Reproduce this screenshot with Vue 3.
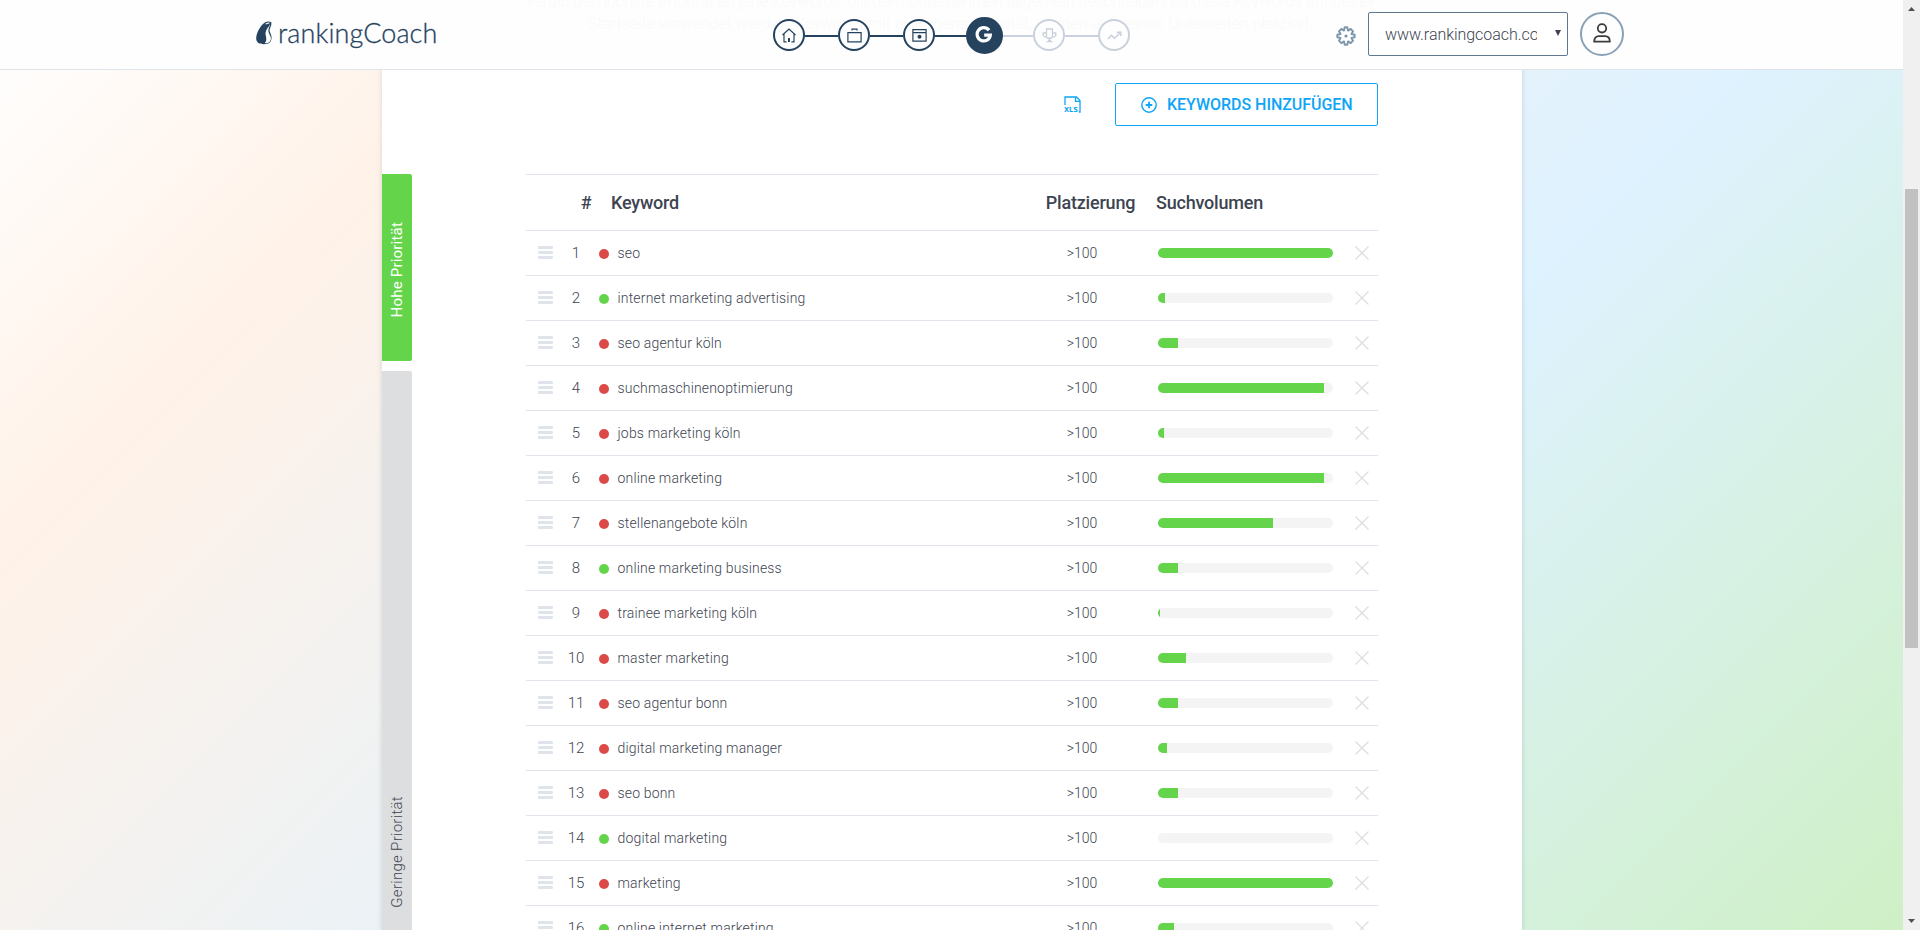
<script setup>
const rows = [
  ['seo', 'red', 175],
  ['internet marketing advertising', 'green', 7],
  ['seo agentur köln', 'red', 20],
  ['suchmaschinenoptimierung', 'red', 166],
  ['jobs marketing köln', 'red', 6],
  ['online marketing', 'red', 166],
  ['stellenangebote köln', 'red', 115],
  ['online marketing business', 'green', 20],
  ['trainee marketing köln', 'red', 2],
  ['master marketing', 'red', 28],
  ['seo agentur bonn', 'red', 20],
  ['digital marketing manager', 'red', 9],
  ['seo bonn', 'red', 20],
  ['dogital marketing', 'green', 0],
  ['marketing', 'red', 175],
  ['online internet marketing', 'green', 16],
].map(([keyword, color, volume], i) => ({ n: i + 1, keyword, color, volume: (volume / 175) * 100 + '%' }))
</script>

<template>
  <div class="screen">
    <div class="main">
      <header class="header">
        <p class="intro">Vergib die höchste Priorität an jene Keywords, die dem Unternehmen allgemein beschreiben, da diese Keywords auf deiner<br>Startseite verwendet werden. Keywords mit niedrigerer Priorität, werden auf deinen Unterseiten platziert.</p>
        <div class="brand">
          <svg width="16" height="24" viewBox="0 0 16 24">
            <path d="M9.200 1.200C11 .2 14 .1 15.300 1.200C15.800 3.400 14.800 5.500 13.800 8C13.300 9.800 13.700 10.800 14.600 12.500C15.600 14.500 16 17.500 14.900 20C13.800 22.600 11 23.200 8 23.200C3.500 23.200 .2 21.600 .2 17.500C.2 12 4.800 3.600 9.200 1.200Z" fill="#25435f"/>
            <path d="M14.300 2.800C12.800 6.200 9.800 8.500 9.500 12C9.400 14.500 10.300 15.500 10.300 18C10.300 20.300 9.300 21.700 8.500 22.300C12.500 22.500 15 20.600 14.900 17.300C14.800 14.300 12.500 12.500 12.300 10C12.300 7.500 14 5.300 14.300 2.800Z" fill="#fff"/>
            <path d="M9.600 3L13.500 1.800" stroke="#fff" stroke-width="1.100"/>
          </svg>
          <span class="brand-name">rankingCoach</span>
        </div>

        <nav class="steps">
          <span class="step">
            <svg width="14" height="15" viewBox="0 0 14 15" fill="none" stroke="currentColor" stroke-width="1.200">
              <path d="M.5 7L7 1L13.500 7M2 6V13.900H4.600M12 6V13.900H9.400"/><path d="M6 10H8V14H6Z" fill="currentColor" stroke="none"/>
            </svg>
          </span>
          <i class="link"></i>
          <span class="step">
            <svg width="15" height="15" viewBox="0 0 15 15" fill="none" stroke="currentColor" stroke-width="1.200">
              <path d="M.9 4.700H14.100V13.900H.9ZM5 2.600V1.100H10V2.600"/>
            </svg>
          </span>
          <i class="link"></i>
          <span class="step">
            <svg width="15" height="15" viewBox="0 0 15 15" fill="none" stroke="currentColor" stroke-width="1.200">
              <path d="M.9 1.700H14.100V13.200H.9ZM.9 4.600H14.100"/><circle cx="7.500" cy="8.800" r="2" fill="currentColor" stroke="none"/>
            </svg>
          </span>
          <i class="link"></i>
          <span class="step active">
            <svg width="18" height="18" viewBox="0 0 18 18" fill="none" stroke="#fff" stroke-width="3.200">
              <path d="M14 4.300A6.600 6.600 0 1 0 15.300 9.200H9.200"/>
            </svg>
          </span>
          <i class="link off"></i>
          <span class="step off">
            <svg width="15" height="15" viewBox="0 0 15 15" fill="none" stroke="currentColor" stroke-width="1.300">
              <path d="M4.500 1H10.500V8.500L9.500 10H5.500L4.500 8.500ZM4.500 5H1.200V7.500L3 8.900H4.700M10.500 5H13.800V7.500L12 8.900H10.300M7.500 10V12.300M4.500 13.700H10.500M6 12.300H9"/>
            </svg>
          </span>
          <i class="link off"></i>
          <span class="step off">
            <svg width="15" height="15" viewBox="0 0 15 15" fill="none" stroke="currentColor" stroke-width="1.500">
              <path d="M.8 11L4.500 7.400L7.600 10.300L13.500 4.400M9.800 4.200H13.800V8"/>
            </svg>
          </span>
        </nav>

        <div class="account">
          <svg class="gear" width="20" height="20" viewBox="0 0 20 20" fill="none" stroke="#7e96ab" stroke-width="1.900" stroke-linejoin="round">
            <path d="M8.700 1.300H11.300L12 4.600L14.700 2.900L17.100 5.300L15.400 8L18.700 8.700V11.300L15.400 12L17.100 14.700L14.700 17.100L12 15.400L11.300 18.700H8.700L8 15.400L5.300 17.100L2.900 14.700L4.600 12L1.300 11.300V8.700L4.600 8L2.900 5.300L5.300 2.900L8 4.600Z"/>
            <circle cx="10" cy="10" r="1.600" fill="#7e96ab" stroke="none"/>
          </svg>
          <div class="site"><span>www.rankingcoach.com</span><i></i></div>
          <div class="user">
            <svg width="18" height="20" viewBox="0 0 18 20" fill="none" stroke="#3b3c40" stroke-width="1.800">
              <circle cx="9" cy="5.300" r="4.200"/><path d="M1.200 18.600C1.200 15 2.800 13.200 6 13.200H12C15.200 13.200 16.800 15 16.800 18.600Z"/>
            </svg>
          </div>
        </div>
      </header>

      <main class="sheet">
        <aside class="tabs">
          <div class="tab high"><span>Hohe Priorität</span></div>
          <div class="tab low"><span>Geringe Priorität</span></div>
        </aside>

        <section class="content">
          <div class="toolbar">
            <svg class="xls" width="17" height="17" viewBox="0 0 17 17" fill="none" stroke="#0ea5f7" stroke-width="1.300">
              <path d="M1 9V1H12.500L16 4.500V16H15M11.500 1V5.300H16"/>
              <text x="0" y="16" class="xls-text" textLength="14" lengthAdjust="spacingAndGlyphs">XLS</text>
            </svg>
            <button class="add">
              <svg width="16" height="16" viewBox="0 0 16 16" fill="none" stroke="currentColor" stroke-width="1.400">
                <circle cx="8" cy="8" r="7.200"/><path d="M8 4.700V11.300M4.700 8H11.300" stroke-width="1.800"/>
              </svg>
              <span>KEYWORDS HINZUFÜGEN</span>
            </button>
          </div>

          <div class="table">
            <div class="row head">
              <span></span><span class="num">#</span><span class="kw-head">Keyword</span>
              <span class="rank">Platzierung</span><span class="vol-head">Suchvolumen</span><span></span>
            </div>
            <div v-for="row in rows" :key="row.n" class="row">
              <span class="grip"><i></i><i></i><i></i></span>
              <span class="num">{{ row.n }}</span>
              <span class="keyword"><i class="dot" :class="row.color"></i>{{ row.keyword }}</span>
              <span class="rank">&gt;100</span>
              <span class="track"><i :style="{ width: row.volume }"></i></span>
              <svg class="remove" width="14" height="14" viewBox="0 0 14 14" stroke="#dcdee1" stroke-width="1.300"><path d="M.5 .5L13.500 13.500M13.500 .5L.5 13.500"/></svg>
            </div>
          </div>
        </section>
      </main>
    </div>

    <div class="scrollbar">
      <svg width="17" height="17"><path d="M5 11H12L8.500 7Z" fill="#505050"/></svg>
      <div class="thumb"></div>
      <svg class="down" width="17" height="17"><path d="M5 6H12L8.500 10Z" fill="#505050"/></svg>
    </div>
  </div>
</template>

<style>
html, body { margin: 0; overflow: hidden; }
</style>

<style scoped>
* { box-sizing: border-box; }
.screen { display: flex; width: 1920px; height: 930px; overflow: hidden; font-family: Roboto, "Liberation Sans", sans-serif; color: #3d4451; }
.main { width: 1903px; height: 930px; display: flex; flex-direction: column; background: linear-gradient(135deg, #fff 0%, #fff2e8 19.500%, #def2ff 64%, #cff0c6 100%); }
svg { display: block; flex: none; }

.header { position: relative; height: 70px; flex: none; background: #fefefe; border-bottom: 1px solid #dfe3ea; padding-left: 256px; display: flex; }
.intro { position: absolute; top: -9px; left: 382px; width: 1137px; margin: 0; text-align: center; font-size: 16px; line-height: 22px; font-weight: 300; color: #fafafa; white-space: nowrap; }
.brand, .steps, .account { position: relative; }
.brand { width: 517px; display: flex; padding-top: 21px; }
.brand-name { font: 300 27px/26px Lato, sans-serif; letter-spacing: .1px; color: #25435f; -webkit-text-stroke: .3px #25435f; margin-left: 6px; margin-top: -1px; }
.steps { display: flex; align-items: center; height: 70px; width: 563px; }
.step { width: 32px; height: 32px; border: 2px solid #25435f; border-radius: 50%; display: flex; align-items: center; justify-content: center; color: #25435f; flex: none; background: #fefefe; }
.step.active { width: 37px; height: 37px; background: #25435f; }
.step.off { border-color: #c9d1dc; color: #c9d1dc; }
.link { width: 33px; height: 2px; background: #25435f; margin-top: 1px; }
.link:has(+ .active) { width: 30.500px; }
.active + .link { width: 30.500px; }
.link.off { background: #c9d1dc; }
.account { display: flex; padding-top: 12px; }
.gear { margin-top: 13.500px; }
.site { width: 200px; height: 44px; margin-left: 12px; border: 1px solid #5f7890; border-radius: 2px; background: #fff; display: flex; align-items: center; padding-left: 16px; font-size: 16px; font-weight: 300; letter-spacing: -.05px; }
.site span { width: 152px; overflow: hidden; white-space: nowrap; }
.site i { margin-left: 18px; margin-top: -2px; border: 3px solid transparent; border-top: 6px solid #3d4451; border-bottom: 0; }
.user { width: 44px; height: 44px; margin-left: 12px; border: 2px solid #8aa0b5; border-radius: 50%; display: flex; align-items: center; justify-content: center; padding-bottom: 2px; }

.sheet { width: 1140px; height: 860px; margin-left: 382px; background: #fff; box-shadow: 0 0 5px rgba(60, 70, 90, .2); display: flex; clip-path: inset(0 -8px); }
.tabs { width: 144px; padding-top: 104px; display: flex; flex-direction: column; gap: 10px; }
.tab { width: 30px; flex: none; display: flex; justify-content: center; border-radius: 0 2px 2px 0; font-size: 15px; line-height: 30px; }
.tab span { writing-mode: vertical-rl; transform: rotate(180deg); white-space: nowrap; letter-spacing: .3px; }
.high { height: 187px; background: #64d44b; color: #fff; align-items: center; }
.high span { margin-top: 5px; letter-spacing: .2px; }
.low { height: 850px; background: #dddee0; font-weight: 300; align-items: flex-start; padding-top: 425px; }
.content { width: 852px; }
.toolbar { display: flex; justify-content: flex-end; padding-top: 13px; height: 104px; }
.xls { margin: 13px 34px 0 0; }
.xls-text { font: 900 7px "DejaVu Sans", sans-serif; fill: #0ea5f7; stroke: none; }
.add { width: 263px; height: 43px; border: 1px solid #0ea5f7; border-radius: 2px; background: #fff; color: #0ea5f7; display: flex; align-items: center; padding: 0 0 0 25px; gap: 10px; font: 500 16px Roboto, sans-serif; letter-spacing: -.03px; white-space: nowrap; }
.table { border-top: 1px solid #dfe3ea; }
.row { height: 45px; border-bottom: 1px solid #dfe3ea; display: grid; grid-template-columns: 34px 32px 448px 84px 206px 48px; align-items: center; font-size: 14px; font-weight: 300; white-space: nowrap; }
.head { height: 56px; font-size: 18px; font-weight: 500; letter-spacing: -.2px; }
.num { text-align: center; }
.row:not(.head) .num { font-size: 15px; }
.head .num { padding-left: 20px; }
.kw-head { padding-left: 19px; }
.rank { text-align: center; }
.head .rank { justify-self: center; margin-left: 17px; }
.vol-head { padding-left: 32px; }
.grip { margin: -1px 0 0 12px; width: 15px; display: flex; flex-direction: column; gap: 2px; }
.grip i { height: 3px; border-radius: 1px; background: #dfe3ea; }
.keyword { display: flex; align-items: center; padding-left: 7px; letter-spacing: .17px; }
.dot { width: 10px; height: 10px; border-radius: 50%; margin: 2px 8.500px 0 0; }
.red { background: #dc4a48; }
.green { background: #64d44b; }
.track { width: 175px; height: 10px; border-radius: 5px; background: #f4f4f4; overflow: hidden; margin-left: 34px; }
.track i { display: block; height: 10px; background: #64d44b; }
.remove { margin: -1px 0 0 24.500px; }

.scrollbar { width: 17px; height: 930px; background: #f0f0f0; display: flex; flex-direction: column; }
.thumb { width: 13px; height: 459px; margin: 172px 2px 0; background: #c1c1c1; }
.down { margin-top: auto; }
</style>
